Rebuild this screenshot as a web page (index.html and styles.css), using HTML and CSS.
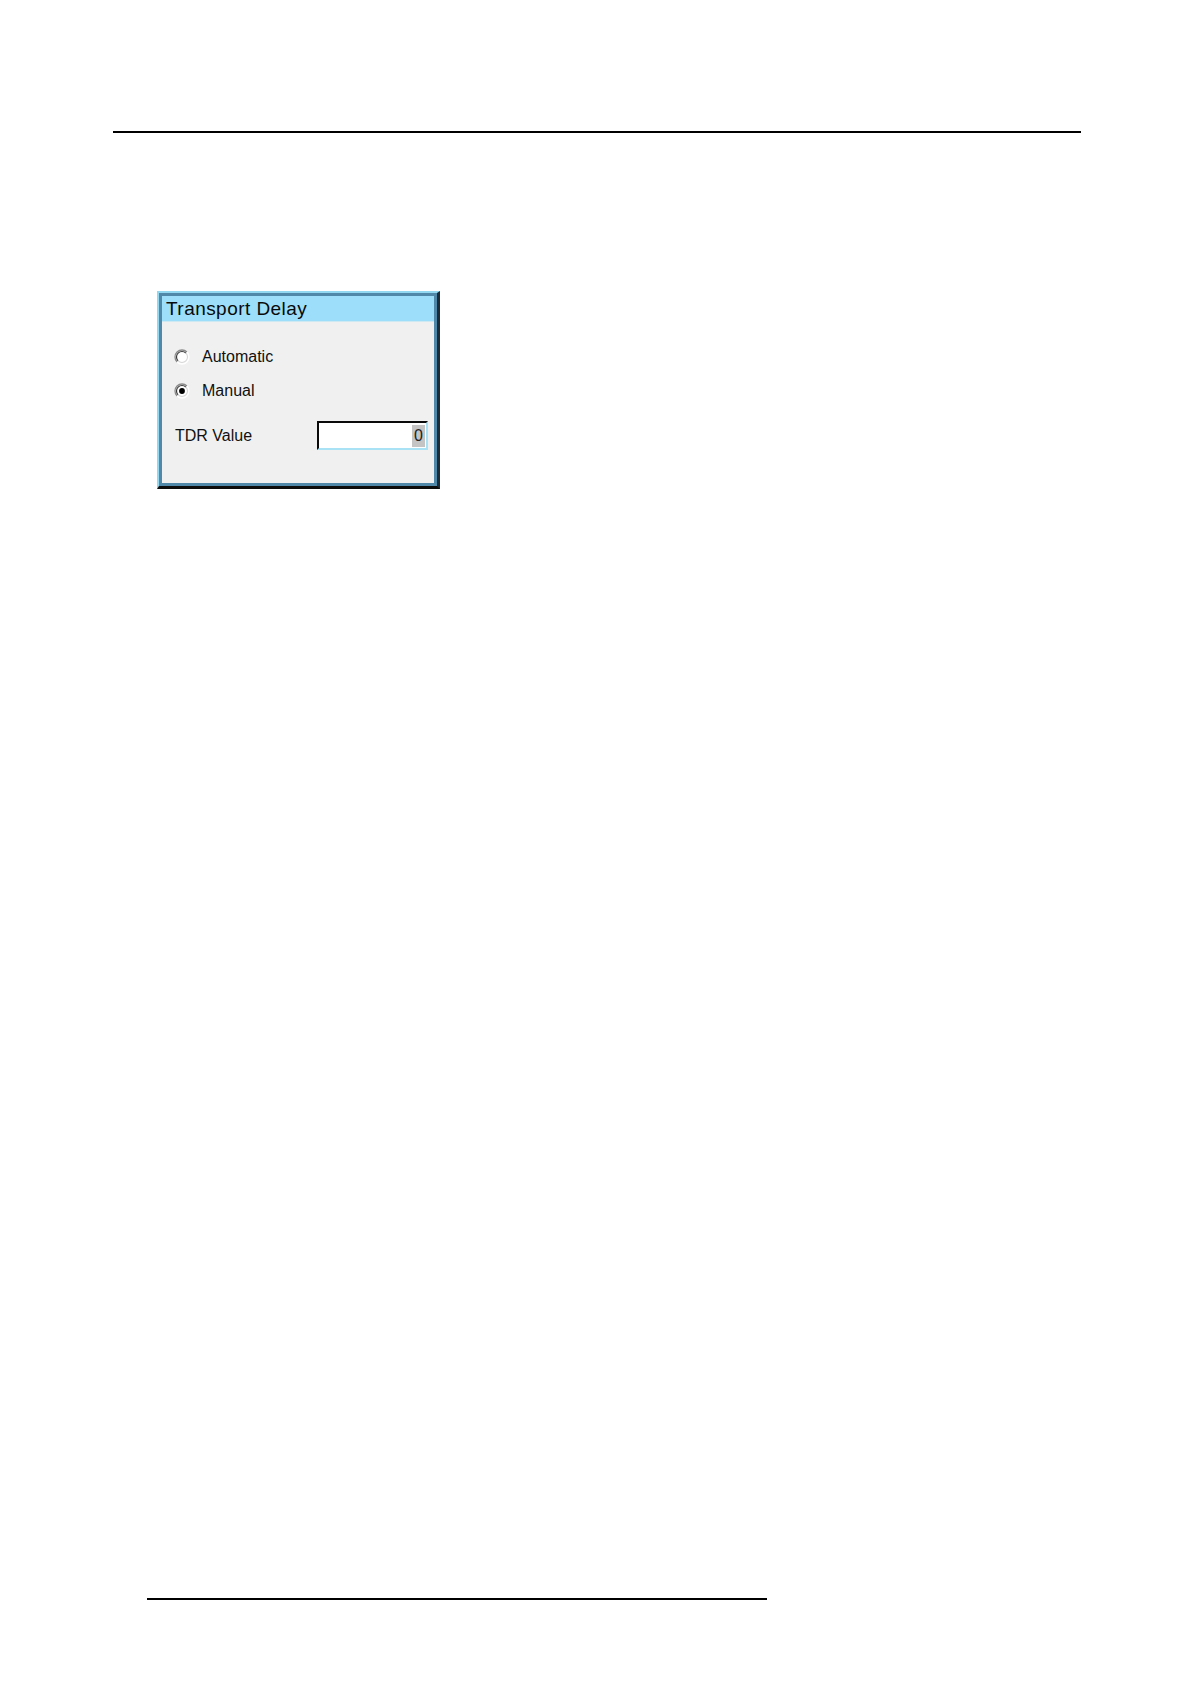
FILE: index.html
```html
<!DOCTYPE html>
<html>
<head>
<meta charset="utf-8">
<link rel="stylesheet" href="styles.css">
</head>
<body>
<div class="page">
  <div class="rule-top"></div>
  <div class="dialog">
    <div class="frame">
      <div class="title">Transport Delay</div>
      <div class="content">
        <div class="radio-row">
          <svg class="radio" width="16" height="16" viewBox="0 0 16 16">
            <circle cx="8" cy="8" r="6.5" fill="#ffffff"/>
            <path d="M3.05 12.95 A7 7 0 0 1 12.95 3.05" fill="none" stroke="#8a8a8a" stroke-width="1.3"/>
            <path d="M4.1 11.9 A5.5 5.5 0 0 1 11.9 4.1" fill="none" stroke="#3a3a3a" stroke-width="1.2"/>
            <path d="M12.95 3.05 A7 7 0 0 1 3.05 12.95" fill="none" stroke="#ffffff" stroke-width="1.3"/>
            <path d="M11.9 4.1 A5.5 5.5 0 0 1 4.1 11.9" fill="none" stroke="#d6d6d6" stroke-width="1.1"/>
          </svg>
          <span class="radio-label">Automatic</span>
        </div>
        <div class="radio-row">
          <svg class="radio" width="16" height="16" viewBox="0 0 16 16">
            <circle cx="8" cy="8" r="6.5" fill="#ffffff"/>
            <path d="M3.05 12.95 A7 7 0 0 1 12.95 3.05" fill="none" stroke="#8a8a8a" stroke-width="1.3"/>
            <path d="M4.1 11.9 A5.5 5.5 0 0 1 11.9 4.1" fill="none" stroke="#3a3a3a" stroke-width="1.2"/>
            <path d="M12.95 3.05 A7 7 0 0 1 3.05 12.95" fill="none" stroke="#ffffff" stroke-width="1.3"/>
            <path d="M11.9 4.1 A5.5 5.5 0 0 1 4.1 11.9" fill="none" stroke="#d6d6d6" stroke-width="1.1"/>
            <circle cx="8" cy="8" r="2.9" fill="#000000"/>
          </svg>
          <span class="radio-label">Manual</span>
        </div>
        <div class="field-row">
          <span class="field-label">TDR Value</span>
          <div class="field"><span class="sel">0</span></div>
        </div>
      </div>
    </div>
  </div>
  <div class="rule-bottom"></div>
</div>
</body>
</html>
```
FILE: styles.css
```css
html, body {
  margin: 0;
  padding: 0;
  background: #ffffff;
}
.page {
  width: 1190px;
  height: 1684px;
  font-family: "Liberation Sans", Arial, sans-serif;
  color: #111111;
  overflow: hidden;
}
.rule-top {
  margin: 131px 0 0 113px;
  width: 968px;
  height: 2px;
  background: #000000;
}
.dialog {
  margin: 158px 0 0 157px;
  width: 283px;
  height: 198px;
  box-sizing: border-box;
  border-style: solid;
  border-width: 2px 3px 3px 2px;
  border-color: #93d8f1 #1b2c38 #0c0c0c #93d8f1;
}
.frame {
  height: 100%;
  box-sizing: border-box;
  border: 3px solid #4f88a8;
  display: flex;
  flex-direction: column;
  background: #f0f0f0;
}
.title {
  height: 25px;
  background: #9ddffa;
  font-size: 19px;
  letter-spacing: 0.45px;
  line-height: 25px;
  padding-left: 4px;
  color: #0a0a0a;
  border-bottom: 1px solid #cfe9f3;
}
.content {
  flex: 1;
  padding: 25px 6px 0 12px;
}
.radio-row {
  display: flex;
  align-items: center;
  height: 20px;
  margin-bottom: 14px;
}
.radio {
  display: block;
  flex: none;
}
.radio-label {
  margin-left: 12px;
  font-size: 16px;
  line-height: 20px;
}
.field-row {
  margin-top: 20px;
  display: flex;
  align-items: center;
  justify-content: space-between;
  padding-left: 1px;
}
.field-label {
  font-size: 16px;
  line-height: 20px;
}
.field {
  width: 111px;
  height: 29px;
  box-sizing: border-box;
  background: #ffffff;
  border-style: solid;
  border-width: 2px 2px 2px 2px;
  border-color: #0a0a0a #a9e2f4 #a9e2f4 #0a0a0a;
  display: flex;
  align-items: center;
  justify-content: flex-end;
  padding-right: 1px;
}
.sel {
  background: #c4c4c4;
  color: #222222;
  font-size: 16px;
  line-height: 22px;
  padding: 0 2px;
}
.rule-bottom {
  margin: 1109px 0 0 147px;
  width: 620px;
  height: 2px;
  background: #000000;
}
```
